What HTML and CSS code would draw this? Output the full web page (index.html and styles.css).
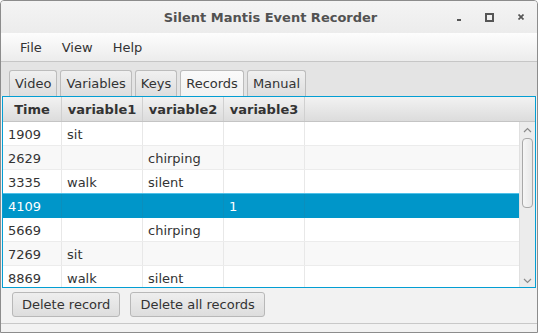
FILE: index.html
```html
<!DOCTYPE html>
<html lang="en">
<head>
    <meta charset="UTF-8">
    <title>Silent Mantis Event Recorder</title>
    <link rel="stylesheet" href="styles.css">
</head>
<body>
    <div class="window">
        <div class="titlebar">
            <span class="title">Silent Mantis Event Recorder</span>
            <div class="controls">
                <span class="ctl min"></span>
                <span class="ctl max"></span>
                <span class="ctl close">
                    <svg width="6" height="6" viewBox="0 0 6 6"><path d="M0.5 0.5L5.5 5.5M5.5 0.5L0.5 5.5" stroke="#555" stroke-width="1.7"/></svg>
                </span>
            </div>
        </div>

        <div class="menubar">
            <span class="menu">File</span>
            <span class="menu">View</span>
            <span class="menu">Help</span>
        </div>

        <div class="tabs">
            <div class="tab">Video</div>
            <div class="tab">Variables</div>
            <div class="tab">Keys</div>
            <div class="tab selected">Records</div>
            <div class="tab">Manual</div>
        </div>

        <div class="table">
            <div class="thead">
                <div class="th">Time</div>
                <div class="th">variable1</div>
                <div class="th">variable2</div>
                <div class="th">variable3</div>
                <div class="th filler"></div>
            </div>
            <div class="tbody">
                <div class="rows">
                    <div class="row"><div class="td">1909</div><div class="td">sit</div><div class="td"></div><div class="td"></div><div class="td filler"></div></div>
                    <div class="row odd"><div class="td">2629</div><div class="td"></div><div class="td">chirping</div><div class="td"></div><div class="td filler"></div></div>
                    <div class="row"><div class="td">3335</div><div class="td">walk</div><div class="td">silent</div><div class="td"></div><div class="td filler"></div></div>
                    <div class="row selected"><div class="td">4109</div><div class="td"></div><div class="td"></div><div class="td">1</div><div class="td filler"></div></div>
                    <div class="row"><div class="td">5669</div><div class="td"></div><div class="td">chirping</div><div class="td"></div><div class="td filler"></div></div>
                    <div class="row odd"><div class="td">7269</div><div class="td">sit</div><div class="td"></div><div class="td"></div><div class="td filler"></div></div>
                    <div class="row"><div class="td">8869</div><div class="td">walk</div><div class="td">silent</div><div class="td"></div><div class="td filler"></div></div>
                </div>
                <div class="scrollbar">
                    <svg class="arrow" width="9" height="6" viewBox="0 0 9 6"><path d="M1 5L4.5 1.5L8 5" fill="none" stroke="#8a8a8a" stroke-width="1.2"/></svg>
                    <div class="track"><div class="thumb"></div></div>
                    <svg class="arrow" width="9" height="6" viewBox="0 0 9 6"><path d="M1 1L4.5 4.5L8 1" fill="none" stroke="#8a8a8a" stroke-width="1.2"/></svg>
                </div>
            </div>
        </div>

        <div class="actions">
            <button class="btn">Delete record</button>
            <button class="btn">Delete all records</button>
        </div>

        <div class="footer"></div>
    </div>
</body>
</html>
```

FILE: styles.css
```css
* {
    box-sizing: border-box;
}

body {
    margin: 0;
    font-family: "DejaVu Sans", "Liberation Sans", sans-serif;
    font-size: 13px;
    color: #333;
}

.window {
    width: 538px;
    height: 333px;
    border: 1px solid #8c8c8c;
    border-radius: 4px 4px 0 0;
    background: #f2f2f2;
    display: flex;
    flex-direction: column;
    overflow: hidden;
}

.titlebar {
    height: 32px;
    flex: none;
    display: flex;
    align-items: center;
    justify-content: center;
    position: relative;
    background: linear-gradient(#f4f4f4, #ececec);
}

.title {
    font-weight: bold;
    color: #525252;
    margin-left: 3px;
}

.controls {
    position: absolute;
    right: 1px;
    top: 0;
    height: 32px;
    display: flex;
    align-items: center;
}

.ctl {
    width: 31px;
    display: flex;
    justify-content: center;
    align-items: center;
}

.min::before {
    content: '';
    width: 4px;
    height: 2px;
    margin-top: 5px;
    background: #555;
}

.max::before {
    content: '';
    width: 5px;
    height: 5px;
    border: 2px solid #555;
}

.close svg {
    display: block;
}

.menubar {
    height: 29px;
    flex: none;
    display: flex;
    align-items: center;
    padding-left: 11px;
    background: linear-gradient(#fdfdfd, #ececec);
    border-bottom: 1px solid #c6c6c6;
}

.menu {
    padding: 0 8px;
    margin-right: 4px;
    color: #333;
}

.tabs {
    height: 34px;
    flex: none;
    display: flex;
    align-items: flex-end;
    gap: 3px;
    padding-left: 8px;
    background: #e4e4e4;
}

.tab {
    height: 26px;
    padding: 0 5px;
    display: flex;
    align-items: center;
    border: 1px solid #bcbcbc;
    border-bottom: none;
    border-radius: 3px 3px 0 0;
    background: linear-gradient(#f0f0f0, #dedede);
    color: #333;
}

.tab.selected {
    background: linear-gradient(#fafafa, #f2f2f2);
}

.table {
    height: 192px;
    flex: none;
    margin: 0 1px 0 1px;
    border: 1px solid #039ed3;
    background: #fff;
    display: flex;
    flex-direction: column;
}

.thead,
.row {
    display: grid;
    grid-template-columns: 59px 81px 81px 81px 1fr;
}

.thead {
    height: 25px;
    flex: none;
    background: linear-gradient(#f2f2f2, #dcdcdc);
    border-bottom: 1px solid #c4c4c4;
}

.th {
    display: flex;
    align-items: center;
    justify-content: center;
    font-weight: bold;
    border-right: 1px solid #d0d0d0;
}

.th.filler {
    border-right: none;
}

.tbody {
    flex: 1;
    display: flex;
    overflow: hidden;
}

.rows {
    flex: 1;
    overflow: hidden;
}

.row {
    height: 24px;
    border-bottom: 1px solid #ececec;
    background: #fff;
}

.row.odd {
    background: #f8f8f8;
}

.td {
    display: flex;
    align-items: center;
    padding: 1px 0 0 5px;
    border-right: 1px solid #e8e8e8;
    white-space: nowrap;
}

.td.filler {
    border-right: none;
}

.row.selected {
    background: #0096c9;
    color: #fff;
    border-top: 1px solid #4fc1e9;
    border-bottom: 1px solid #0096c9;
    margin-top: -1px;
    height: 25px;
}

.row.selected .td {
    border-right-color: #0a8fbd;
}

.scrollbar {
    width: 16px;
    flex: none;
    background: #ececec;
    border-left: 1px solid #e0e0e0;
    display: flex;
    flex-direction: column;
    align-items: center;
    padding: 5px 0 3px;
}

.arrow {
    flex: none;
    display: block;
}

.track {
    flex: 1;
    width: 100%;
    padding: 5px 2px;
}

.thumb {
    height: 70px;
    border: 1px solid #a8a8a8;
    border-radius: 4px;
    background: linear-gradient(90deg, #f6f6f6, #e8e8e8);
}

.actions {
    height: 35px;
    flex: none;
    display: flex;
    align-items: flex-start;
    gap: 10px;
    padding: 4px 0 0 11px;
}

.btn {
    height: 25px;
    padding: 0 9px;
    font-family: inherit;
    font-size: 13px;
    color: #333;
    border: 1px solid #b8b8b8;
    border-radius: 3px;
    background: linear-gradient(#eeeeee, #dddddd);
}

.footer {
    flex: 1;
    border-top: 1px solid #c8c8c8;
    background: #f2f2f2;
}
```
